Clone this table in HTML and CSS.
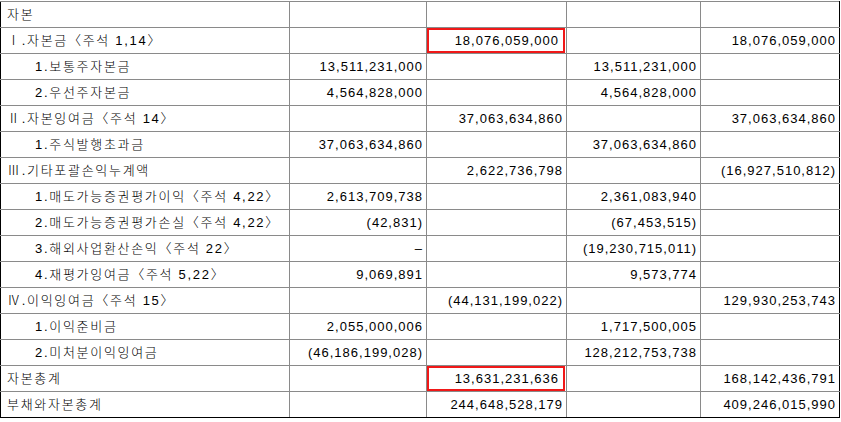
FILE: index.html
```html
<!DOCTYPE html>
<html lang="ko">
<head>
<meta charset="utf-8">
<link rel="stylesheet" href="styles.css">
</head>
<body>
<table class="bs">
  <colgroup>
    <col class="c1"><col class="c2"><col class="c3"><col class="c4"><col class="c5">
  </colgroup>
  <tbody>
    <tr><td class="lbl">자본</td><td></td><td></td><td></td><td></td></tr>
    <tr><td class="lbl">Ⅰ.자본금〈주석 1,14〉</td><td></td><td class="num"><span class="hl">18,076,059,000</span></td><td></td><td class="num">18,076,059,000</td></tr>
    <tr><td class="lbl sub">1.보통주자본금</td><td class="num">13,511,231,000</td><td></td><td class="num">13,511,231,000</td><td></td></tr>
    <tr><td class="lbl sub">2.우선주자본금</td><td class="num">4,564,828,000</td><td></td><td class="num">4,564,828,000</td><td></td></tr>
    <tr><td class="lbl">Ⅱ.자본잉여금〈주석 14〉</td><td></td><td class="num">37,063,634,860</td><td></td><td class="num">37,063,634,860</td></tr>
    <tr><td class="lbl sub">1.주식발행초과금</td><td class="num">37,063,634,860</td><td></td><td class="num">37,063,634,860</td><td></td></tr>
    <tr><td class="lbl">Ⅲ.기타포괄손익누계액</td><td></td><td class="num">2,622,736,798</td><td></td><td class="num">(16,927,510,812)</td></tr>
    <tr><td class="lbl sub">1.매도가능증권평가이익〈주석 4,22〉</td><td class="num">2,613,709,738</td><td></td><td class="num">2,361,083,940</td><td></td></tr>
    <tr><td class="lbl sub">2.매도가능증권평가손실〈주석 4,22〉</td><td class="num">(42,831)</td><td></td><td class="num">(67,453,515)</td><td></td></tr>
    <tr><td class="lbl sub">3.해외사업환산손익〈주석 22〉</td><td class="num">–</td><td></td><td class="num">(19,230,715,011)</td><td></td></tr>
    <tr><td class="lbl sub">4.재평가잉여금〈주석 5,22〉</td><td class="num">9,069,891</td><td></td><td class="num">9,573,774</td><td></td></tr>
    <tr><td class="lbl">Ⅳ.이익잉여금〈주석 15〉</td><td></td><td class="num">(44,131,199,022)</td><td></td><td class="num">129,930,253,743</td></tr>
    <tr><td class="lbl sub">1.이익준비금</td><td class="num">2,055,000,006</td><td></td><td class="num">1,717,500,005</td><td></td></tr>
    <tr><td class="lbl sub">2.미처분이익잉여금</td><td class="num">(46,186,199,028)</td><td></td><td class="num">128,212,753,738</td><td></td></tr>
    <tr><td class="lbl">자본총계</td><td></td><td class="num"><span class="hl">13,631,231,636</span></td><td></td><td class="num">168,142,436,791</td></tr>
    <tr><td class="lbl">부채와자본총계</td><td></td><td class="num">244,648,528,179</td><td></td><td class="num">409,246,015,990</td></tr>
  </tbody>
</table>
</body>
</html>
```
FILE: styles.css
```css
html, body {
  margin: 0;
  padding: 0;
  background: #fff;
}
body {
  padding-top: 1px;
  font-family: "Liberation Sans", "Noto Sans CJK KR", sans-serif;
  font-size: 13px;
  color: #000;
}
.bs {
  border-collapse: collapse;
  table-layout: fixed;
  width: 839px;
  border-left: 1px solid #000;
  border-right: 1px solid #000;
  border-bottom: 1px solid #000;
}
.c1 { width: 289px; }
.c2 { width: 137px; }
.c3 { width: 140px; }
.c4 { width: 134px; }
.c5 { width: 139px; }
.bs td {
  height: 25px;
  padding: 0;
  border: 1px solid #8a8a8a;
  letter-spacing: 1px;
  line-height: 25px;
  white-space: nowrap;
  vertical-align: middle;
}
.bs tr td:first-child { border-left: 1px solid #000; }
.bs tr td:last-child { border-right: 1px solid #000; }
.bs tr:last-child td { border-bottom: 1px solid #000; }
.lbl {
  padding-left: 6px !important;
  font-weight: 300;
  letter-spacing: 1.7px !important;
}
.lbl.sub { padding-left: 34px !important; }
.num { text-align: right; padding-right: 3px !important; }
.hl {
  display: block;
  margin: 0 -2px 0 0;
  padding-right: 4px;
  line-height: 21px;
  border: 2px solid #f01818;
}
```
